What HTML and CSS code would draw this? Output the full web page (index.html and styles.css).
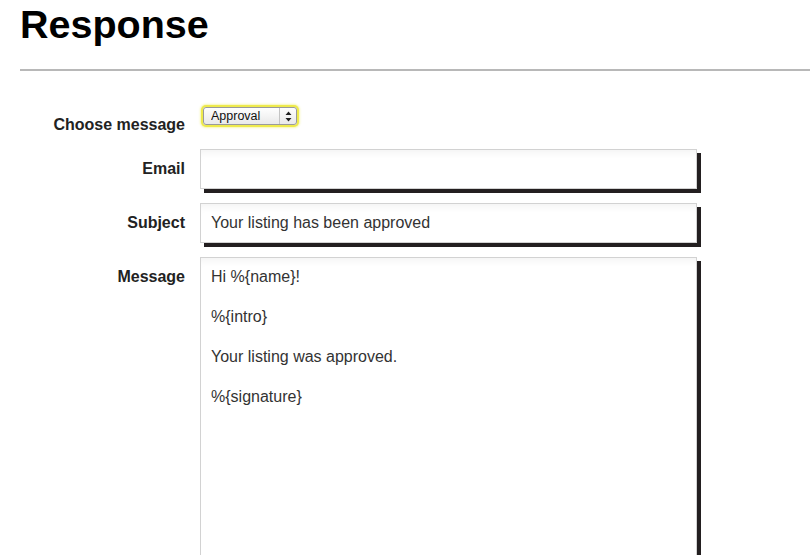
FILE: index.html
```html
<!DOCTYPE html>
<html>
<head>
<meta charset="utf-8">
<link rel="stylesheet" href="styles.css">
</head>
<body>
<div class="page">
  <h1 class="title">Response</h1>
  <hr class="rule">
  <form class="form">
    <label class="label">Choose message</label>
    <div class="field">
      <span class="select-wrap">
        <select class="select"><option>Approval</option></select>
        <span class="select-arrows">
          <svg width="7" height="11" viewBox="0 0 7 11"><path d="M3.5 0.5 L6.5 4 H0.5 Z M3.5 10.5 L6.5 7 H0.5 Z" fill="#222"/></svg>
        </span>
      </span>
    </div>

    <label class="label">Email</label>
    <div class="field"><input class="input" type="text" value=""></div>

    <label class="label">Subject</label>
    <div class="field"><input class="input" type="text" value="Your listing has been approved"></div>

    <label class="label">Message</label>
    <div class="field"><textarea class="textarea">Hi %{name}!

%{intro}

Your listing was approved.

%{signature}</textarea></div>
  </form>
</div>
</body>
</html>
```
FILE: styles.css
```css
html, body {
  margin: 0;
  padding: 0;
  background: #fff;
  overflow: hidden;
}
body {
  font-family: "Liberation Sans", Arial, sans-serif;
  color: #222;
}
.page {
  padding-left: 20px;
}
.title {
  margin: 5px 0 0;
  font-size: 39.5px;
  line-height: 39px;
  font-weight: bold;
  color: #000;
}
.rule {
  margin: 25px 0 0;
  border: 0;
  height: 2px;
  background: #b8b8b8;
}
.form {
  margin-top: 34px;
  display: grid;
  grid-template-columns: 165px 497px;
  column-gap: 15px;
  row-gap: 14px;
}
.label {
  text-align: right;
  font-weight: bold;
  font-size: 16px;
  line-height: 20px;
  padding-top: 10px;
  color: #222;
}
.field {
  display: flex;
}
.select-wrap {
  position: relative;
  display: inline-block;
  margin-left: 1px;
}
.select {
  -webkit-appearance: none;
  appearance: none;
  width: 85px;
  height: 16px;
  margin: 2px;
  padding: 0 0 0 7px;
  border: 1px solid #9a9a9a;
  border-radius: 3px;
  font-family: "Liberation Sans", Arial, sans-serif;
  font-size: 12.5px;
  line-height: 14px;
  color: #111;
  background: linear-gradient(#ffffff, #e9e9e9);
  box-shadow: 0 0 0 2px #eeea4c, 0 0 2px 3px rgba(238, 234, 76, 0.45);
  outline: none;
  box-sizing: content-box;
}
.select-arrows {
  position: absolute;
  top: 3px;
  right: 3px;
  width: 16px;
  height: 16px;
  border-left: 1px solid #c4c4c4;
  display: flex;
  align-items: center;
  justify-content: center;
}
.input, .textarea {
  box-sizing: border-box;
  width: 497px;
  border: 1px solid #d2d2d2;
  background: #fff;
  box-shadow: inset 0 8px 8px -6px rgba(0, 0, 0, 0.06), 4px 4px 0 #231f20;
  font-family: "Liberation Sans", Arial, sans-serif;
  font-size: 16px;
  color: #333;
  outline: none;
  margin: 0;
}
.input {
  height: 40px;
  padding: 0 10px;
}
.textarea {
  height: 320px;
  padding: 9px 10px;
  line-height: 20px;
  resize: none;
  overflow: hidden;
  display: block;
}
```
